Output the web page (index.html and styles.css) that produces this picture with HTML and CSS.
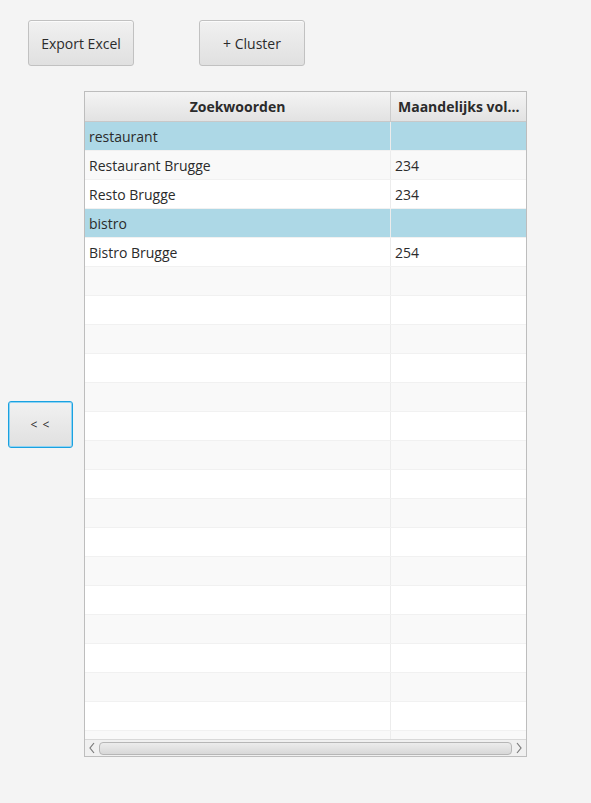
FILE: index.html
```html
<!DOCTYPE html>
<html>
<head>
<meta charset="utf-8">
<link rel="stylesheet" href="styles.css">
</head>
<body>
<div class="app">
  <div class="toolbar">
    <button class="btn btn-export">Export Excel</button>
    <button class="btn btn-cluster">+ Cluster</button>
  </div>
  <div class="main">
    <div class="side">
      <button class="btn btn-back">&lt; &lt;</button>
    </div>
    <div class="table">
      <div class="thead">
        <div class="th c1">Zoekwoorden</div>
        <div class="th c2">Maandelijks vol...</div>
      </div>
      <div class="tbody">
        <div class="row group"><div class="td c1">restaurant</div><div class="td c2"></div></div>
        <div class="row odd"><div class="td c1">Restaurant Brugge</div><div class="td c2">234</div></div>
        <div class="row"><div class="td c1">Resto Brugge</div><div class="td c2">234</div></div>
        <div class="row group"><div class="td c1">bistro</div><div class="td c2"></div></div>
        <div class="row"><div class="td c1">Bistro Brugge</div><div class="td c2">254</div></div>
        <div class="row odd"><div class="td c1"></div><div class="td c2"></div></div>
        <div class="row"><div class="td c1"></div><div class="td c2"></div></div>
        <div class="row odd"><div class="td c1"></div><div class="td c2"></div></div>
        <div class="row"><div class="td c1"></div><div class="td c2"></div></div>
        <div class="row odd"><div class="td c1"></div><div class="td c2"></div></div>
        <div class="row"><div class="td c1"></div><div class="td c2"></div></div>
        <div class="row odd"><div class="td c1"></div><div class="td c2"></div></div>
        <div class="row"><div class="td c1"></div><div class="td c2"></div></div>
        <div class="row odd"><div class="td c1"></div><div class="td c2"></div></div>
        <div class="row"><div class="td c1"></div><div class="td c2"></div></div>
        <div class="row odd"><div class="td c1"></div><div class="td c2"></div></div>
        <div class="row"><div class="td c1"></div><div class="td c2"></div></div>
        <div class="row odd"><div class="td c1"></div><div class="td c2"></div></div>
        <div class="row"><div class="td c1"></div><div class="td c2"></div></div>
        <div class="row odd"><div class="td c1"></div><div class="td c2"></div></div>
        <div class="row"><div class="td c1"></div><div class="td c2"></div></div>
        <div class="row odd"><div class="td c1"></div><div class="td c2"></div></div>
      </div>
      <div class="hscroll">
        <svg class="arrow" width="10" height="12" viewBox="0 0 10 12"><path d="M7 1 L3 6 L7 11" fill="none" stroke="#7a7a7a" stroke-width="1.2"/></svg>
        <div class="thumb"></div>
        <svg class="arrow" width="10" height="12" viewBox="0 0 10 12"><path d="M3 1 L7 6 L3 11" fill="none" stroke="#7a7a7a" stroke-width="1.2"/></svg>
      </div>
    </div>
  </div>
</div>
</body>
</html>
```
FILE: styles.css
```css
html, body {
  margin: 0;
  padding: 0;
  background: #f4f4f4;
}
body {
  width: 591px;
  height: 803px;
  overflow: hidden;
  font-family: "Open Sans", "Noto Sans", sans-serif;
  font-size: 14px;
  color: #2b2b2b;
}
.app {
  display: flex;
  flex-direction: column;
}
.toolbar {
  display: flex;
  padding: 20px 0 0 28px;
  gap: 65px;
}
.btn {
  font-family: "Open Sans", "Noto Sans", sans-serif;
  font-size: 14px;
  color: #2b2b2b;
  background: linear-gradient(#f1f1f1, #e0e0e0);
  border: 1px solid #c1c1c1;
  border-radius: 3px;
  box-shadow: inset 0 1px 0 #fbfbfb;
  padding: 0;
  margin: 0;
  cursor: default;
}
.btn-export, .btn-cluster {
  width: 106px;
  height: 46px;
}
.main {
  display: flex;
  margin-top: 25px;
}
.side {
  width: 84px;
  padding-left: 8px;
  box-sizing: border-box;
  padding-top: 310px;
}
.btn-back {
  width: 65px;
  height: 47px;
  border: 1px solid #1aa1e0;
  box-shadow: 0 0 0 1px #8fd3f3 inset;
  font-size: 12px;
  letter-spacing: 1px;
}
.table {
  width: 443px;
  height: 666px;
  box-sizing: border-box;
  border: 1px solid #bdbdbd;
  background: #ffffff;
  display: flex;
  flex-direction: column;
  overflow: hidden;
  position: relative;
}
.thead {
  display: flex;
  height: 30px;
  flex: none;
  background: linear-gradient(#f4f4f4, #e2e2e2);
  border-bottom: 1px solid #c8c8c8;
  box-sizing: border-box;
}
.th {
  font-weight: bold;
  display: flex;
  align-items: center;
  justify-content: center;
  white-space: nowrap;
  overflow: hidden;
  box-sizing: border-box;
}
.th.c1 {
  border-right: 1px solid #cccccc;
}
.th.c2 {
  justify-content: flex-start;
  padding-left: 7px;
}
.c1 {
  width: 306px;
  flex: none;
}
.c2 {
  flex: 1;
}
.tbody {
  flex: 1;
  overflow: hidden;
}
.row {
  display: flex;
  height: 29px;
  box-sizing: border-box;
  border-bottom: 1px solid #f1f1f1;
  background: #ffffff;
}
.row.odd {
  background: #f9f9f9;
}
.row.group {
  background: #add8e6;
  border-bottom-color: #f1f1f1;
}
.td {
  display: flex;
  align-items: center;
  padding-left: 4px;
  box-sizing: border-box;
  white-space: nowrap;
}
.td.c1 {
  border-right: 1px solid #ececec;
}
.hscroll {
  flex: none;
  height: 16px;
  display: flex;
  align-items: center;
  background: #f0f0f0;
  border-top: 1px solid #d8d8d8;
  padding: 0 2px;
  gap: 2px;
}
.arrow {
  flex: none;
}
.thumb {
  flex: 1;
  height: 11px;
  border: 1px solid #b6b6b6;
  border-radius: 4px;
  background: linear-gradient(#ececec, #d8d8d8);
}
```
